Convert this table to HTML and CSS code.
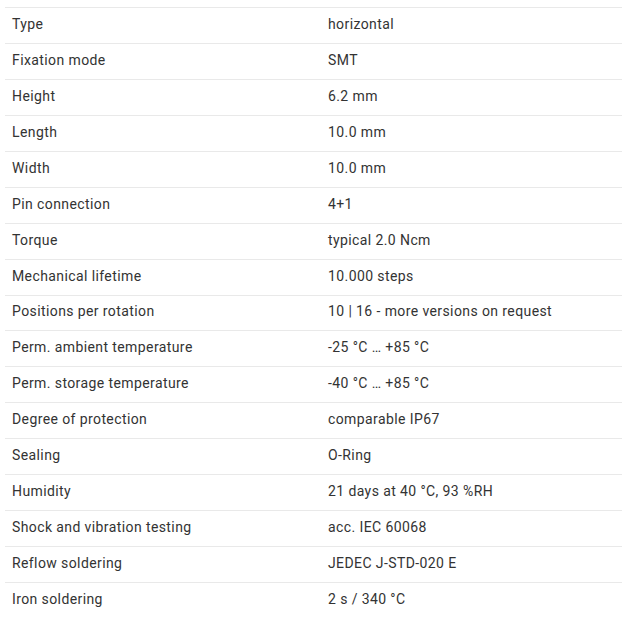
FILE: index.html
```html
<!DOCTYPE html>
<html>
<head>
<meta charset="utf-8">
<link rel="stylesheet" href="styles.css">
</head>
<body>
<div class="wrap">
<table class="specs">
<colgroup><col class="c1"><col class="c2"></colgroup>
<tbody>
<tr><td>Type</td><td>horizontal</td></tr>
<tr><td>Fixation mode</td><td>SMT</td></tr>
<tr><td>Height</td><td>6.2 mm</td></tr>
<tr><td>Length</td><td>10.0 mm</td></tr>
<tr><td>Width</td><td>10.0 mm</td></tr>
<tr><td>Pin connection</td><td>4+1</td></tr>
<tr><td>Torque</td><td>typical 2.0 Ncm</td></tr>
<tr><td>Mechanical lifetime</td><td>10.000 steps</td></tr>
<tr><td>Positions per rotation</td><td>10 | 16 - more versions on request</td></tr>
<tr><td>Perm. ambient temperature</td><td>-25 °C … +85 °C</td></tr>
<tr><td>Perm. storage temperature</td><td>-40 °C … +85 °C</td></tr>
<tr><td>Degree of protection</td><td>comparable IP67</td></tr>
<tr><td>Sealing</td><td>O-Ring</td></tr>
<tr><td>Humidity</td><td>21 days at 40 °C, 93 %RH</td></tr>
<tr><td>Shock and vibration testing</td><td>acc. IEC 60068</td></tr>
<tr><td>Reflow soldering</td><td>JEDEC J-STD-020 E</td></tr>
<tr><td>Iron soldering</td><td>2 s / 340 °C</td></tr>
</tbody>
</table>
</div>
</body>
</html>
```
FILE: styles.css
```css
html, body {
  margin: 0;
  padding: 0;
  background: #ffffff;
}
.wrap {
  padding: 7px 0 0 5px;
  overflow: hidden;
}
.specs {
  border-collapse: collapse;
  width: 617px;
  table-layout: fixed;
  font-family: Roboto, "Liberation Sans", sans-serif;
  font-size: 14px;
  letter-spacing: 0.4px;
  color: #333333;
}
.c1 { width: 316px; }
.c2 { width: 301px; }
.specs td {
  height: 35.94px;
  padding: 0 7px 3px;
  box-sizing: border-box;
  border-top: 1px solid #e9e9e9;
  vertical-align: middle;
  white-space: nowrap;
}
```
